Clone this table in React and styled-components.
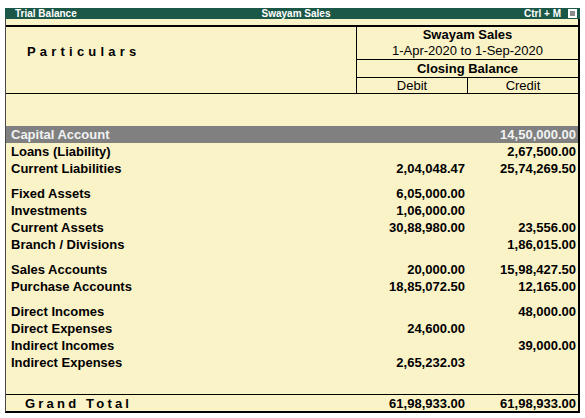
import React from 'react';
import styled, { createGlobalStyle } from 'styled-components';

const groups = [
  [
    { name: 'Capital Account', credit: '14,50,000.00', selected: true },
    { name: 'Loans (Liability)', credit: '2,67,500.00' },
    { name: 'Current Liabilities', debit: '2,04,048.47', credit: '25,74,269.50' },
  ],
  [
    { name: 'Fixed Assets', debit: '6,05,000.00' },
    { name: 'Investments', debit: '1,06,000.00' },
    { name: 'Current Assets', debit: '30,88,980.00', credit: '23,556.00' },
    { name: 'Branch / Divisions', credit: '1,86,015.00' },
  ],
  [
    { name: 'Sales Accounts', debit: '20,000.00', credit: '15,98,427.50' },
    { name: 'Purchase Accounts', debit: '18,85,072.50', credit: '12,165.00' },
  ],
  [
    { name: 'Direct Incomes', credit: '48,000.00' },
    { name: 'Direct Expenses', debit: '24,600.00' },
    { name: 'Indirect Incomes', credit: '39,000.00' },
    { name: 'Indirect Expenses', debit: '2,65,232.03' },
  ],
];

export default function App() {
  return (
    <>
      <GlobalStyle />
      <Window>
        <TitleBar>
          <TitleLeft>Trial Balance</TitleLeft>
          <TitleCenter>Swayam Sales</TitleCenter>
          <TitleRight>
            Ctrl + M
            <CloseBox><CloseDot /></CloseBox>
          </TitleRight>
        </TitleBar>
        <Sheet>
          <Header>
            <HeaderLeft>
              <Spaced spacing="4.2px">Particulars</Spaced>
            </HeaderLeft>
            <HeaderRight>
              <CompanyCell>
                <Bold>Swayam Sales</Bold>
                <span>1-Apr-2020 to 1-Sep-2020</span>
              </CompanyCell>
              <ClosingCell>
                <Bold>Closing Balance</Bold>
              </ClosingCell>
              <SideRow>
                <SideCell>Debit</SideCell>
                <SideCell last>Credit</SideCell>
              </SideRow>
            </HeaderRight>
          </Header>
          <Body>
            {groups.map((group, gi) => (
              <Group key={gi}>
                {group.map((row) => (
                  <Row key={row.name} selected={row.selected}>
                    <Name>{row.name}</Name>
                    <Amount>{row.debit || ''}</Amount>
                    <Amount last>{row.credit || ''}</Amount>
                  </Row>
                ))}
              </Group>
            ))}
          </Body>
          <TotalRow>
            <Name>
              <Spaced spacing="3.2px">Grand Total</Spaced>
            </Name>
            <Amount>61,98,933.00</Amount>
            <Amount last>61,98,933.00</Amount>
          </TotalRow>
        </Sheet>
      </Window>
    </>
  );
}

const GlobalStyle = createGlobalStyle`
  body {
    margin: 0;
    background: #ffffff;
    font-family: "Liberation Sans", Arial, sans-serif;
  }
`;

const Window = styled.div`
  margin: 8px 0 0 5px;
  width: 575px;
  display: flex;
  flex-direction: column;
`;

const TitleBar = styled.div`
  height: 11px;
  background: #1b5848;
  color: #ffffff;
  font-family: "Liberation Sans", Arial, sans-serif;
  font-weight: bold;
  font-size: 10px;
  line-height: 11px;
  display: grid;
  grid-template-columns: 1fr auto 1fr;
  align-items: center;
  padding: 0 3px 0 10px;
`;

const TitleLeft = styled.div``;

const TitleCenter = styled.div`
  text-align: center;
`;

const TitleRight = styled.div`
  display: flex;
  justify-content: flex-end;
  align-items: center;
  gap: 7px;
`;

const CloseBox = styled.div`
  width: 9px;
  height: 9px;
  background: #ffffff;
  display: flex;
  align-items: center;
  justify-content: center;
`;

const CloseDot = styled.div`
  width: 5px;
  height: 5px;
  background: #8c8c8c;
`;

const Sheet = styled.div`
  background: #fbf3c8;
  border-left: 1px solid #4a4a4a;
  border-right: 2px solid #000000;
  border-bottom: 2px solid #000000;
  padding-top: 6px;
  color: #000000;
  font-size: 13px;
`;

const Header = styled.div`
  display: flex;
  border-top: 2px solid #000000;
  border-bottom: 1px solid #000000;
`;

const HeaderLeft = styled.div`
  flex: 1;
  padding: 17px 0 0 21px;
  font-weight: bold;
`;

const Spaced = styled.span`
  letter-spacing: ${(p) => p.spacing};
  font-weight: bold;
`;

const HeaderRight = styled.div`
  width: 221px;
  border-left: 1px solid #000000;
  display: flex;
  flex-direction: column;
`;

const CompanyCell = styled.div`
  height: 32px;
  display: flex;
  flex-direction: column;
  align-items: center;
  justify-content: center;
  line-height: 16px;
  border-bottom: 1px solid #000000;
`;

const Bold = styled.span`
  font-weight: bold;
`;

const ClosingCell = styled.div`
  height: 17px;
  line-height: 17px;
  text-align: center;
  border-bottom: 1px solid #000000;
`;

const SideRow = styled.div`
  display: grid;
  grid-template-columns: 111px 1fr;
  height: 15px;
  line-height: 15px;
`;

const SideCell = styled.div`
  text-align: center;
  border-right: ${(p) => (p.last ? 'none' : '1px solid #000000')};
`;

const Body = styled.div`
  height: 300px;
  padding-top: 32px;
  box-sizing: border-box;
  display: flex;
  flex-direction: column;
  gap: 8px;
`;

const Group = styled.div`
  display: flex;
  flex-direction: column;
`;

const Row = styled.div`
  display: grid;
  grid-template-columns: 1fr 112px 110px;
  height: 17px;
  line-height: 17px;
  font-weight: bold;
  background: ${(p) => (p.selected ? '#808080' : 'transparent')};
  color: ${(p) => (p.selected ? '#f1f3f3' : '#000000')};
`;

const Name = styled.div`
  padding-left: 5px;
  white-space: nowrap;
`;

const Amount = styled.div`
  text-align: right;
  padding-right: ${(p) => (p.last ? '2px' : '3px')};
  white-space: nowrap;
`;

const TotalRow = styled.div`
  display: grid;
  grid-template-columns: 1fr 112px 110px;
  border-top: 1px solid #000000;
  height: 16px;
  line-height: 17px;
  font-weight: bold;

  ${Name} {
    padding-left: 19px;
  }
`;
